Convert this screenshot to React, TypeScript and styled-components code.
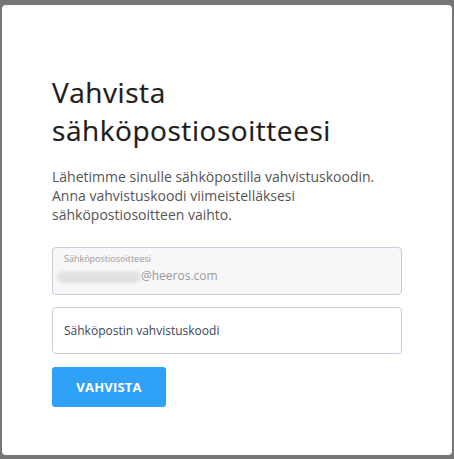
import React from "react";
import styled, { createGlobalStyle } from "styled-components";

const Global = createGlobalStyle`
  html, body { margin: 0; padding: 0; }
  body { background: #767676; font-family: "Open Sans", "Noto Sans", sans-serif; }
`;

const Backdrop = styled.div`
  width: 454px;
  height: 459px;
  box-sizing: border-box;
  padding: 5px 2px 4px 2px;
  display: flex;
`;

const Modal = styled.div`
  flex: 1;
  background: #fff;
  border-radius: 4px;
  box-sizing: border-box;
  padding: 68px 50px 0 50px;
  display: flex;
  flex-direction: column;
`;

const Title = styled.h1`
  margin: 0;
  font-size: 28px;
  line-height: 38px;
  font-weight: 400;
  color: #1c1c1c;
  letter-spacing: 0.55px;
  -webkit-text-stroke: 0.2px #1c1c1c;
`;

const Text = styled.p`
  margin: 18px 0 0 0;
  font-size: 14px;
  line-height: 19px;
  color: #555;
`;

const Field = styled.div<{ $disabled?: boolean }>`
  margin-top: ${(p) => (p.$disabled ? "23px" : "12px")};
  height: ${(p) => (p.$disabled ? "48px" : "47px")};
  box-sizing: border-box;
  border: 1px solid #c6cedb;
  border-radius: 4px;
  background: ${(p) => (p.$disabled ? "#f7f7f7" : "#fff")};
  display: flex;
  flex-direction: column;
  justify-content: center;
  padding: 0 11px;
`;

const FieldLabel = styled.div`
  font-size: 9px;
  line-height: 11px;
  color: #9a9a9a;
  margin-top: -5px;
`;

const Value = styled.div`
  display: flex;
  align-items: center;
  font-size: 12px;
  line-height: 18px;
  color: #9a9a9a;
  margin-left: -7px;
  margin-top: 3px;
`;

const Blur = styled.span`
  display: inline-block;
  width: 84px;
  height: 12px;
  border-radius: 6px;
  background: #e2e2e2;
  filter: blur(1.5px);
  margin-top: 3px;
`;

const Placeholder = styled.div`
  font-size: 12px;
  color: #3b4659;
`;

const Button = styled.button`
  margin-top: 13px;
  align-self: flex-start;
  width: 114px;
  height: 40px;
  border: none;
  border-radius: 3px;
  background: #2fa2f8;
  color: #fff;
  font-family: "Open Sans", sans-serif;
  font-weight: 700;
  font-size: 13px;
  letter-spacing: 0.2px;
  cursor: pointer;
`;

export default function App() {
  return (
    <>
      <Global />
      <Backdrop>
        <Modal>
          <Title>
            Vahvista
            <br />
            sähköpostiosoitteesi
          </Title>
          <Text>
            Lähetimme sinulle sähköpostilla vahvistuskoodin.
            <br />
            Anna vahvistuskoodi viimeistelläksesi
            <br />
            sähköpostiosoitteen vaihto.
          </Text>
          <Field $disabled>
            <FieldLabel>Sähköpostiosoitteesi</FieldLabel>
            <Value>
              <Blur />
              @heeros.com
            </Value>
          </Field>
          <Field>
            <Placeholder>Sähköpostin vahvistuskoodi</Placeholder>
          </Field>
          <Button>VAHVISTA</Button>
        </Modal>
      </Backdrop>
    </>
  );
}
